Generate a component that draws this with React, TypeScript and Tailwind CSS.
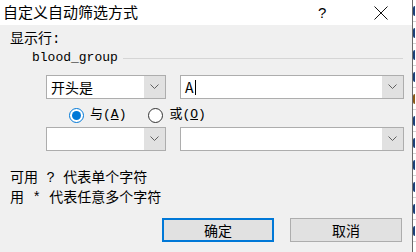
import React from "react";

const cjk = { fontFamily: '"Noto Sans CJK SC", "Noto Sans", sans-serif' };
const mixed = { fontFamily: '"Liberation Mono", "Noto Sans CJK SC", monospace' };

function Chevron() {
  return (
    <svg width="9" height="6" viewBox="0 0 9 6" className="text-[#606060]">
      <path d="M0.5 0.5 L4.5 4.5 L8.5 0.5" fill="none" stroke="currentColor" strokeWidth="1" />
    </svg>
  );
}

function ComboBox({ width, value, caret }: { width: string; value?: string; caret?: boolean }) {
  return (
    <div className={`flex h-[24px] ${width} border border-[#adadad] bg-white`}>
      <div className="flex flex-1 items-center pl-[4px] text-[14px] text-black" style={cjk}>
        {value}
        {caret && <span className="ml-[1px] inline-block h-[15px] w-[1px] bg-black" />}
      </div>
      <div className="flex w-[21px] items-center justify-center bg-[#e1e1e1]">
        <Chevron />
      </div>
    </div>
  );
}

function Radio({ checked }: { checked?: boolean }) {
  return checked ? (
    <div className="flex h-[15px] w-[15px] items-center justify-center rounded-full border border-[#0078d7] bg-white">
      <div className="h-[9px] w-[9px] rounded-full bg-[#0078d7]" />
    </div>
  ) : (
    <div className="h-[15px] w-[15px] rounded-full border border-[#333333] bg-white" />
  );
}

// the spreadsheet behind the dialog: only the left edge of each cell's digit shows
function SheetEdge() {
  const cells = ["blue", "blue", "blue", "blue", "brown", "blue", "blue", "blue", "blue", "blue", "blue"];
  return (
    <div className="flex w-[3px] flex-col overflow-hidden bg-white">
      {cells.map((c, i) => (
        <div key={i} className="flex h-[22px] shrink-0 items-center border-b border-[#d4d4d4]">
          <div
            className={`h-[10px] w-[2px] rounded-l-full border-l-2 ${
              c === "brown" ? "border-[#8a5a1a]" : "border-[#1b3f78]"
            }`}
          />
        </div>
      ))}
    </div>
  );
}

export default function App() {
  return (
    <div className="flex h-[252px] w-[416px] overflow-hidden bg-white">
      <div className="flex h-full w-[413px] flex-col border-r border-[#6b6b6b]">
        {/* title bar */}
        <div className="flex h-[25px] items-center bg-white text-black">
          <span className="pl-[3px] text-[15px]" style={cjk}>
            自定义自动筛选方式
          </span>
          <div className="flex-1" />
          <span className="w-[12px] text-[15px] leading-none" style={{ fontFamily: '"Liberation Sans", sans-serif' }}>
            ?
          </span>
          <div className="ml-[44px] mr-[24px] flex w-[14px] items-center justify-center">
            <svg width="14" height="14" viewBox="0 0 14 14">
              <path d="M0.5 0.5 L13.5 13.5 M13.5 0.5 L0.5 13.5" stroke="#111" strokeWidth="1" />
            </svg>
          </div>
        </div>

        {/* body */}
        <div className="flex flex-1 flex-col bg-[#f0f0f0] text-[14px] text-black">
          <div className="ml-[10px] mt-[6px] h-[16px] leading-[16px]" style={mixed}>
            显示行:
          </div>
          <div className="mt-[3px] flex h-[16px] items-center">
            <span className="ml-[32px] text-[13px] leading-[16px]" style={mixed}>
              blood_group
            </span>
            <div className="ml-[5px] mr-[9px] h-[1px] flex-1 bg-[#d5d5d5]" />
          </div>

          <div className="ml-[46px] mt-[9px] flex gap-[14px]">
            <ComboBox width="w-[120px]" value="开头是" />
            <ComboBox width="w-[224px]" value="A" caret />
          </div>

          <div className="mt-[8px] flex h-[16px] items-center text-[13px]" style={mixed}>
            <div className="ml-[69px]">
              <Radio checked />
            </div>
            <span className="ml-[6px] leading-[16px]">
              与(<span className="underline">A</span>)
            </span>
            <div className="ml-[22px]">
              <Radio />
            </div>
            <span className="ml-[6px] leading-[16px]">
              或(<span className="underline">O</span>)
            </span>
          </div>

          <div className="ml-[46px] mt-[4px] flex gap-[14px]">
            <ComboBox width="w-[120px]" />
            <ComboBox width="w-[224px]" />
          </div>

          <div className="ml-[10px] mt-[19px] h-[16px] leading-[16px]" style={mixed}>
            可用 ? 代表单个字符
          </div>
          <div className="ml-[10px] mt-[4px] h-[16px] leading-[16px]" style={mixed}>
            用 * 代表任意多个字符
          </div>

          <div className="mr-[10px] mt-[12px] flex justify-end gap-[16px]">
            <button
              className="flex h-[24px] w-[112px] items-center justify-center border-2 border-[#0078d7] bg-[#e1e1e1] text-[14px]"
              style={cjk}
            >
              确定
            </button>
            <button
              className="flex h-[24px] w-[112px] items-center justify-center border border-[#adadad] bg-[#e1e1e1] text-[14px]"
              style={cjk}
            >
              取消
            </button>
          </div>
        </div>
      </div>
      <SheetEdge />
    </div>
  );
}
